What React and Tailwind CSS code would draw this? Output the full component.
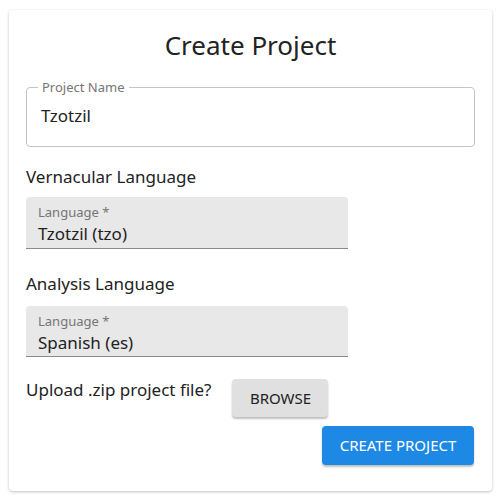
export default function App() {
  return (
    <div className="min-h-screen bg-white px-[9px] pt-[10px]" style={{ fontFamily: '"Noto Sans", sans-serif' }}>
      <div className="w-[483px] h-[481px] rounded bg-white shadow-[0_1px_3px_rgba(0,0,0,0.25)] px-[17px] pt-[17px]">
        <h1 className="text-center text-[26px] leading-[36px] text-[#222]">Create Project</h1>

        <fieldset className="mt-[17px] h-[67px] rounded border border-[#c4c4c4] px-[10px]">
          <legend className="ml-[1px] px-[4px] text-[13px] leading-[14px] text-[#757575]">Project Name</legend>
          <div className="pl-[4px] pt-[9px] text-[17px] text-[#222]">Tzotzil</div>
        </fieldset>

        <div className="mt-[18px] text-[17px] leading-[24px] text-[#222]">Vernacular Language</div>
        <div className="mt-[8px] h-[52px] w-[322px] rounded-t bg-[#e8e8e8] border-b border-[#8a8a8a] px-[12px] pt-[5px]">
          <div className="text-[13px] leading-[20px] text-[#757575]">Language *</div>
          <div className="text-[17px] leading-[24px] text-[#222]">Tzotzil (tzo)</div>
        </div>

        <div className="mt-[23px] text-[17px] leading-[24px] text-[#222]">Analysis Language</div>
        <div className="mt-[10px] h-[51px] w-[322px] rounded-t bg-[#e8e8e8] border-b border-[#8a8a8a] px-[12px] pt-[5px]">
          <div className="text-[13px] leading-[20px] text-[#757575]">Language *</div>
          <div className="text-[17px] leading-[24px] text-[#222]">Spanish (es)</div>
        </div>

        <div className="mt-[22px] flex items-start">
          <div className="-mt-[1px] text-[17px] leading-[24px] text-[#222]">Upload .zip project file?</div>
          <button className="ml-[21px] h-[38px] w-[96px] rounded bg-[#e0e0e0] text-[15px] text-[#222] shadow-[0_2px_2px_rgba(0,0,0,0.25)]">
            BROWSE
          </button>
        </div>

        <div className="mt-[9px] flex justify-end pr-[1px]">
          <button className="h-[39px] w-[152px] rounded bg-[#1e88e5] text-[15px] text-white shadow-[0_2px_2px_rgba(0,0,0,0.25)]">
            CREATE PROJECT
          </button>
        </div>
      </div>
    </div>
  )
}
